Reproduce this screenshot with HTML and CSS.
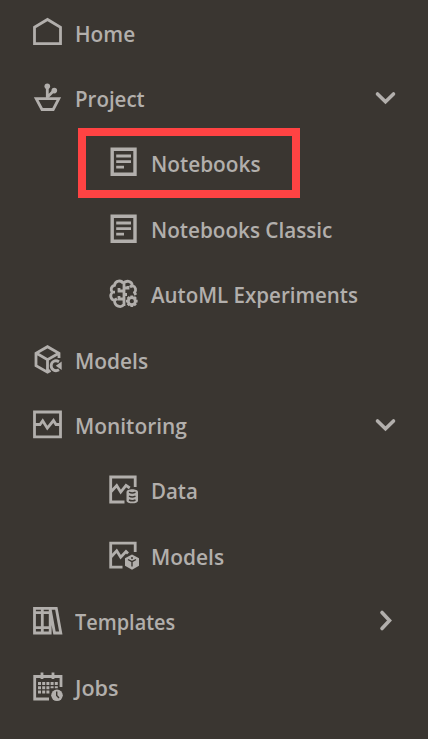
FILE: index.html
```html
<!DOCTYPE html>
<html lang="en">
<head>
<meta charset="utf-8">
<title>Navigation</title>
<link rel="stylesheet" href="styles.css">
</head>
<body>
<nav class="nav">
  <a class="item"><svg class="icon" viewBox="0 0 32 32"><path d="M3.5 11.3 16.5 3.5 29.5 11.3V27.7H3.5Z"/></svg><span class="label home">Home</span></a>
  <a class="item"><svg class="icon" viewBox="0 0 32 32"><path d="M5.2 17.7H27.8L22.2 28.5H11Z"/><path d="M16.3 17V5M17 15.5 23 9.5"/><circle class="fill" cx="16.3" cy="5.3" r="2.8"/><circle class="fill" cx="23.3" cy="9.6" r="2.8"/></svg><span class="label project">Project</span><svg class="chevron" viewBox="0 0 24 24"><path d="m4.5 9 8 7.8 8-7.8"/></svg></a>
  <a class="item sub selected"><svg class="icon" viewBox="0 0 32 32"><path class="heavy" d="M5.2 3.2H28V28.3H5.2Z"/><path d="M9.2 10H24M9.2 15.6H24M9.2 21.2H17"/></svg><span class="label notebooks">Notebooks</span></a>
  <a class="item sub"><svg class="icon" viewBox="0 0 32 32"><path class="heavy" d="M5.2 4.2H28V29.3H5.2Z"/><path d="M9.2 11H24M9.2 16.6H24M9.2 22.2H17"/></svg><span class="label classic">Notebooks Classic</span></a>
  <a class="item sub"><svg class="icon" viewBox="0 0 32 32"><path d="M16.2 6.5C14.5 2.8 8.2 3.2 7.5 8.3 3.8 9.2 3.3 13.3 5.5 15.2 2.2 18 4 23 7.5 23.3 7.5 29.7 14.3 31.2 16.8 27.5M16.2 6.5C19 2.8 25 3.8 25.3 8.5 28.8 9.5 29.5 13.3 27.5 15.5L28.8 18M17 5V29M17 11H21V9M17 17.5H20M16 14H12V11M16 22H12V19M5.5 15.2H8M7.5 23.3 10 21.7M25.3 8.5 23 10"/><circle cx="24.8" cy="24.2" r="3.5"/><path d="M24.8 18.5V20.5M24.8 28V30M19 24.2H21M28.6 24.2H30.6M20.7 20.1 22.1 21.5M27.5 26.9 28.9 28.3M20.7 28.3 22.1 26.9M27.5 21.5 28.9 20.1"/></svg><span class="label automl">AutoML Experiments</span></a>
  <a class="item"><svg class="icon" viewBox="0 0 32 32"><path d="M28 15V10.2L16.5 3.7 5 10.2V22.7L16.5 29.2 19.5 27.5M5.5 10.3 16.5 16.6 27.8 10.3M16.5 16.6V29"/><path d="M28 18.7C24 16.3 20.2 19 20.2 22.7S24 29.2 28 26.8"/><path class="fill" d="M30.7 18.5V27L24.8 22.7Z"/></svg><span class="label models">Models</span></a>
  <a class="item"><svg class="icon" viewBox="0 0 32 32"><path d="M3.5 4H29.5V28.8H3.5Z"/><path d="M4 16.5H9L11.7 12.7 16.3 20.2 22.5 12.5 25 16.5H29"/></svg><span class="label monitoring">Monitoring</span><svg class="chevron" viewBox="0 0 24 24"><path d="m4.5 9 8 7.8 8-7.8"/></svg></a>
  <a class="item sub"><svg class="icon" viewBox="0 0 32 32"><path d="M28.2 14V4H3.7V29H17.5M4 18.8 9.7 12.5 13.7 19 19 12.3 22.7 15"/><path class="fill" d="M19.5 19C19.5 15.2 31 15.2 31 19V27.5C31 31.3 19.5 31.3 19.5 27.5Z"/><path class="cut" d="M22 19.2Q25.2 20.8 28.5 19.2M22 23.2Q25.2 24.8 28.5 23.2M22 27Q25.2 28.6 28.5 27"/></svg><span class="label data">Data</span></a>
  <a class="item sub"><svg class="icon" viewBox="0 0 32 32"><path d="M28.2 13V4.2H3.7V28.2H15.5M4 18 9.7 11.7 13.7 18.2 19 12.5 21 14.5"/><path class="fill" d="M25 15.5 32 19.3V26.7L25 30.7 18 26.7V19.3Z"/><path class="cut" d="M21 20.5 25 22.7 29 20.5M25 23V27.5"/><circle class="dot" cx="25" cy="19" r="1"/></svg><span class="label models">Models</span></a>
  <a class="item"><svg class="icon" viewBox="0 0 32 32"><path d="M3.5 4.3H19.2V29H3.5ZM11.3 4.5V28.5M3.5 8.7H18M3.5 23.7H18M19 4.3H25.3L29.8 29H23.5Z"/></svg><span class="label templates">Templates</span><svg class="chevron" viewBox="0 0 24 24"><path d="m9 4.5 7.5 8L9 20.5"/></svg></a>
  <a class="item"><svg class="icon" viewBox="0 0 32 32"><path d="M30 17V6.5H3.7V29H18"/><path d="M11 2.5V9M22 2.5V9"/><path class="fill" d="M7 12h3v3H7zM11.2 12h3v3h-3zM15.4 12h3v3h-3zM19.6 12h3v3h-3zM23.8 12h3v3h-3zM7 16.2h3v3H7zM11.2 16.2h3v3h-3zM15.4 16.2h3v3h-3zM19.6 16.2h3v2h-3zM23.8 16.2h3v2h-3zM7 20.4h3v3H7zM11.2 20.4h3v3h-3zM15.4 20.4h3v3h-3z"/><circle class="fill" cx="26" cy="25.3" r="5.8"/><path class="cut" d="M25.7 21.5V25.5L28 28"/></svg><span class="label jobs">Jobs</span></a>
</nav>
</body>
</html>
```
FILE: styles.css
```css
*, *::before, *::after { box-sizing: border-box; }
body {
  margin: 0;
  height: 739px;
  overflow: hidden;
  background: #3a3631;
  color: #b2afac;
  font-family: "Open Sans", "Noto Sans", sans-serif;
}
.nav {
  display: grid;
  grid-template-rows: repeat(11, 65.4px);
}
.item {
  position: relative;
  display: flex;
  align-items: center;
  padding: 0 31px;
}
.sub { padding-left: 107px; }
.icon {
  flex: none;
  width: 32px;
  height: 32px;
  margin: 0 11.5px 2px 0;
  overflow: visible;
}
svg { fill: none; stroke: currentColor; stroke-width: 2.8; }
.heavy { stroke-width: 3.4; }
.fill { fill: currentColor; stroke: none; }
.cut { stroke: #3a3631; stroke-width: 1.4; }
.dot { fill: #3a3631; stroke: none; }
.label {
  font-size: 22px;
  line-height: 30px;
  font-weight: 600;
  white-space: nowrap;
  transform-origin: left;
}
.home { transform: scaleX(.945); }
.project { transform: scaleX(.93); }
.notebooks { transform: scaleX(.945); }
.classic { transform: scaleX(.94); }
.automl { transform: scaleX(.932); }
.models { transform: scaleX(.95); }
.monitoring { transform: scaleX(.95); }
.data { transform: scaleX(.93); }
.templates { transform: scaleX(.905); }
.jobs { transform: scaleX(.98); }
.chevron {
  flex: none;
  width: 24px;
  height: 24px;
  margin: 0 0 3px auto;
  stroke-width: 3.6;
  stroke-linecap: round;
}
.selected::after {
  content: "";
  position: absolute;
  left: 78px;
  top: -3px;
  width: 222px;
  height: 70px;
  border: 8px solid #ff4343;
}
```
